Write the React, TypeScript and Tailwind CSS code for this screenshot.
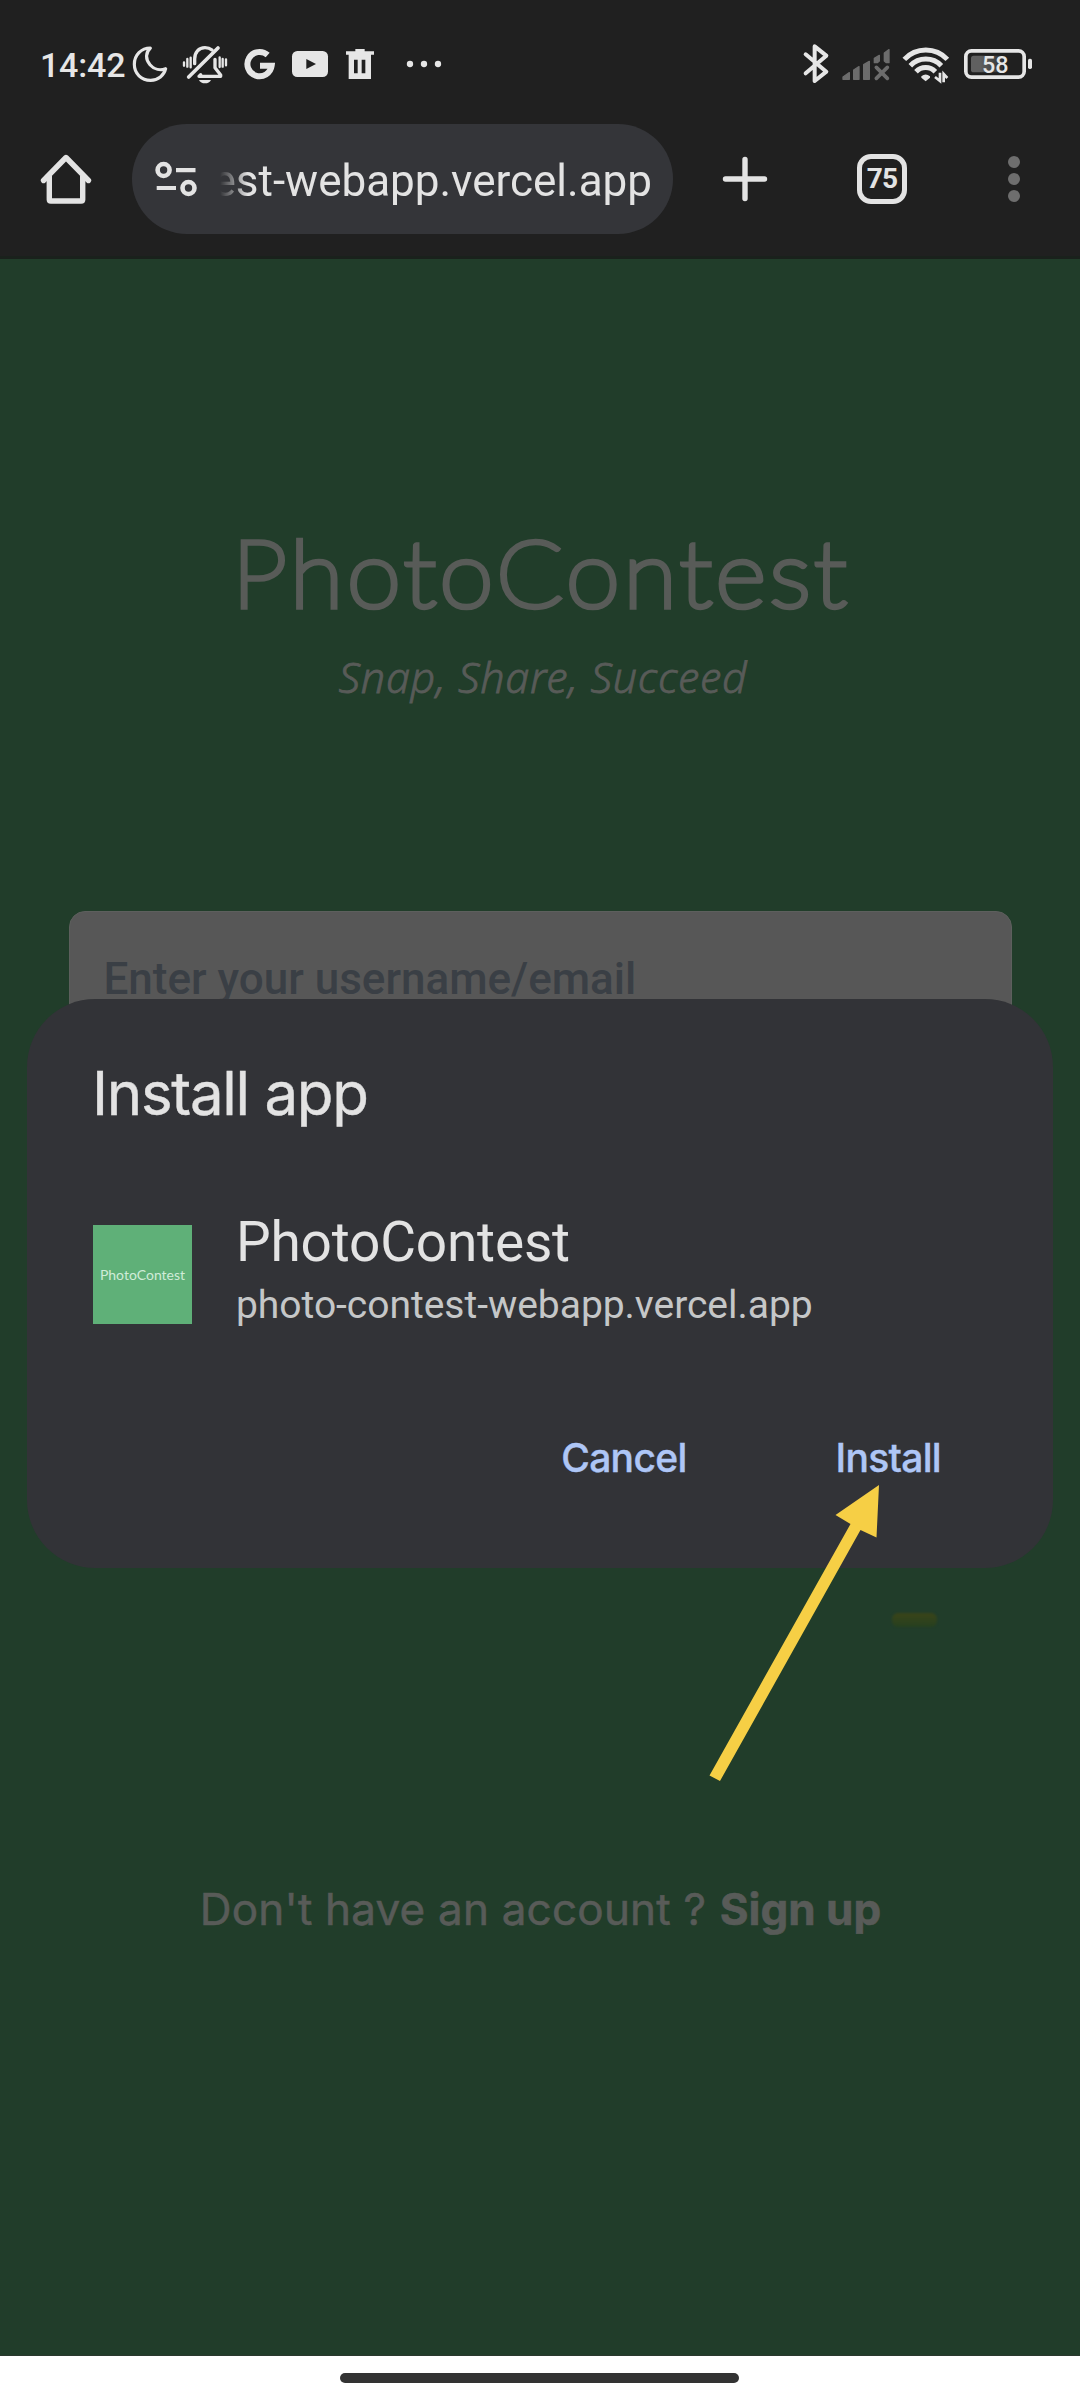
function StatusBar() {
  return (
    <div className="flex h-[124px] items-center justify-between pt-1 pr-10 pl-10 text-[#e6e6e6]">
      <div className="flex items-center">
        <span className="w-[89px] pt-px font-['Roboto',sans-serif] text-[34px] leading-10 font-medium tracking-[-0.2px]">14:42</span>
        <svg viewBox="387 66 126 132" className="h-11 w-[42px]" fill="none" stroke="currentColor" strokeWidth="9.5" strokeLinejoin="round">
          <path d="M451 84C424 84 403 105 403 133C403 161 424 181 452 181C475 181 492 166 497 146C482 152 463 149 450 134C436 118 436 98 451 84Z" />
        </svg>
        <svg viewBox="513 66 198 132" className="h-11 w-[66px]" fill="none" stroke="currentColor" strokeLinecap="round">
          <path d="M584 131V117C584 97 596 83 615 83C623 83 630 85 636 90" strokeWidth="10" />
          <path d="M566 171L654 84" strokeWidth="11" />
          <path d="M645 118V143L662 165V169H597L602 164" strokeWidth="10" strokeLinejoin="round" />
          <path d="M597 180H633C630 187 623 190 615 190C607 190 600 187 597 180Z" fill="currentColor" stroke="none" />
          <path d="M552 127V137M562 117V140M572 113V142M659 112V141M668 117V140M678 118V136" strokeWidth="7" />
        </svg>
        <svg viewBox="711 66 138 132" className="h-11 w-[46px]" fill="none" stroke="currentColor" strokeWidth="18">
          <path d="M803 105A36.5 36.5 0 1 0 815 137H780" />
        </svg>
        <svg viewBox="849 66 162 132" className="h-11 w-[54px]" fill="currentColor">
          <rect x="876" y="93" width="108" height="78" rx="16" />
          <path d="M919 117L948 132L919 147Z" fill="#202020" />
        </svg>
        <svg viewBox="1011 66 141 132" className="h-11 w-[47px]" fill="currentColor">
          <path d="M1066 87H1094V94H1122V104H1113V177H1046V104H1038V94H1066Z" />
          <path d="M1062 119H1073V160H1062ZM1085 119H1096V160H1085Z" fill="#202020" />
        </svg>
        <svg viewBox="1152 66 198 132" className="h-11 w-[66px]" fill="currentColor">
          <circle cx="1230" cy="132" r="9.5" />
          <circle cx="1272" cy="132" r="9.5" />
          <circle cx="1314" cy="132" r="9.5" />
        </svg>
      </div>
      <div className="flex items-center">
        <svg viewBox="48 66 120 132" className="h-11 w-10" fill="none" stroke="currentColor" strokeWidth="12" strokeLinecap="round" strokeLinejoin="round">
          <path d="M77 103L139 155L104 183V79L139 107L77 160" />
        </svg>
        <svg viewBox="168 66 180 132" className="h-11 w-[60px] text-[#6c6c6c]" fill="currentColor" stroke="currentColor" strokeWidth="4" strokeLinejoin="round">
          <path d="M189 171L208 158V178H189ZM221 150L237 140V178H221ZM251 134L268 124V178H251ZM283 115L298 106V123L292 128H283ZM313 99L327 89V128H319L313 123Z" />
          <path d="M289 142L322 175M322 142L289 175" strokeWidth="11" strokeLinecap="round" />
        </svg>
        <svg viewBox="348 66 180 132" className="h-11 w-[60px]" fill="none" stroke="currentColor" strokeWidth="15">
          <path d="M373 118A88 88 0 0 1 502 118" />
          <path d="M391 137A64 64 0 0 1 484 137" />
          <path d="M408 155A40 40 0 0 1 466 155" />
          <path d="M424 169Q437 158 450 169L450 173L437 184L424 173Z" fill="currentColor" stroke="none" />
          <path d="M480 158V183L465 171M491 187V162L502 174" strokeWidth="8" />
        </svg>
        <svg viewBox="528 66 252 132" className="h-11 w-[84px]" fill="none">
          <defs>
            <linearGradient id="charge" x1="0" x2="1">
              <stop offset="0.3" stopColor="#606060" />
              <stop offset="1" stopColor="#303030" />
            </linearGradient>
          </defs>
          <rect x="557.5" y="92.5" width="175" height="79" rx="17" stroke="currentColor" strokeWidth="11" />
          <rect x="573" y="107" width="96" height="50" rx="8" fill="url(#charge)" />
          <rect x="744" y="116" width="12" height="31" rx="5" fill="currentColor" />
          <text x="646" y="158" textAnchor="middle" fill="currentColor" className="font-['Roboto',sans-serif] text-[70px] font-medium">58</text>
        </svg>
      </div>
    </div>
  );
}

function Toolbar() {
  return (
    <div className="flex h-[132px] items-start text-[#e3e3e3]">
      <div className="flex h-[110px] w-[132px] items-center pl-9">
        <svg viewBox="36 149 60 60" className="size-[60px]" fill="none" stroke="currentColor" strokeWidth="5.4" strokeLinejoin="round">
          <path d="M43.5 180.5L66 157.5L88.5 180.5" strokeLinecap="round" />
          <path d="M49.3 176V199.5Q49.3 201 50.8 201H81.2Q82.7 201 82.7 199.5V176" />
        </svg>
      </div>
      <div className="flex h-[110px] w-[541px] items-center justify-between rounded-full bg-[#343539] pr-[21px] pl-[18px]">
        <svg viewBox="150 154 50 50" className="size-[50px]" fill="none" stroke="currentColor" strokeWidth="4.6">
          <circle cx="163.6" cy="170" r="6" />
          <path d="M176 170.2H195.5M156.7 188H176" strokeWidth="4.2" />
          <circle cx="188.5" cy="188" r="6" />
        </svg>
        <div className="flex w-[440px] justify-end [mask-image:linear-gradient(to_right,transparent_8px,black_36px)]">
          <span className="pt-[3px] font-['Roboto',sans-serif] text-[44px] leading-[56px] whitespace-nowrap">est-webapp.vercel.app</span>
        </div>
      </div>
      <div className="flex h-[110px] flex-1 items-center pl-[42px]">
        <svg viewBox="715 149 60 60" className="size-[60px]" fill="none" stroke="currentColor" strokeWidth="5.4" strokeLinecap="round">
          <path d="M745 159.5V198.5M725.5 179H764.5" />
        </svg>
        <div className="ml-[82px] flex size-[50px] items-center justify-center rounded-[14px] border-[5.5px] border-current">
          <span className="font-['Roboto',sans-serif] text-[28px] leading-8 font-bold tracking-[-0.7px]">75</span>
        </div>
        <div className="ml-[101px] flex flex-col gap-[5px] text-[#6e6e6e]">
          <i className="size-3 rounded-full bg-current" />
          <i className="size-3 rounded-full bg-current" />
          <i className="size-3 rounded-full bg-current" />
        </div>
      </div>
    </div>
  );
}

function InstallDialog() {
  return (
    <div className="absolute top-[740px] left-[27px] flex h-[569px] w-[1026px] flex-col rounded-[68px] bg-[#323337] px-[66px] font-['Roboto',sans-serif] text-[#e3e3e3]">
      <h2 className="mt-[54px] -ml-[1px] font-['Inter',sans-serif] text-[60px] leading-[80px] tracking-[-1.3px] [-webkit-text-stroke:0.4px_#e3e3e3]">Install app</h2>
      <div className="mt-[70px] flex items-start">
        <div className="mt-[22px] flex size-[99px] items-center justify-center bg-[#5fb078] font-['Lato',sans-serif] text-[14px] text-[#d0ecd8]">
          PhotoContest
        </div>
        <div className="ml-11 flex flex-col pt-px">
          <span className="text-[55px] leading-[76px] tracking-[-0.2px]">PhotoContest</span>
          <span className="text-[39px] leading-[50px] tracking-[-0.03px] text-[#c5c7c8]">photo-contest-webapp.vercel.app</span>
        </div>
      </div>
      <div className="mt-[98px] flex justify-end gap-[149px] pr-[46px] font-['Inter',sans-serif] text-[39px] leading-[60px] font-medium tracking-[-0.7px] text-[#aec6f6] [-webkit-text-stroke:0.4px_#aec6f6]">
        <button>Cancel</button>
        <button>Install</button>
      </div>
    </div>
  );
}

export default function App() {
  return (
    <div className="flex h-[2400px] w-[1080px] flex-col overflow-hidden bg-[#202020]">
      <StatusBar />
      <Toolbar />
      <div className="h-[3px] bg-[#1a211c]" />
      <main className="relative flex h-[2097px] flex-col items-center border-b border-[#2b382e] bg-[#213d2a] text-[#585b58]">
        <h1 className="mt-[252px] scale-x-105 pl-[3px] font-['Lato',sans-serif] text-[93px] leading-[120px] font-thin tracking-[3.6px] [-webkit-text-stroke:5.5px_#585b58]">
          PhotoContest
        </h1>
        <p className="mt-4 pl-[6px] font-['Noto_Sans',sans-serif] text-[43px] leading-[60px] font-light tracking-[0.7px] italic [-webkit-text-stroke:0.8px_#585b58]">
          Snap, Share, Succeed
        </p>
        <div className="mt-[204px] h-[136px] w-[943px] rounded-2xl border border-[#5d5f5d] bg-[#575757] pl-[34px] font-['Roboto',sans-serif] text-[44px] leading-[134px] font-medium text-[#3a3f45]">
          Enter your username/email
        </div>
        <i className="mt-[566px] ml-[749px] h-[14px] w-[45px] rounded-md bg-linear-to-b from-[#3a4419] to-[#26401f] blur-[1px]" />
        <p className="mt-[252px] pl-px font-['Inter',sans-serif] text-[44px] leading-[60px] tracking-[0.2px] whitespace-nowrap [-webkit-text-stroke:0.6px_#585b58]">
          Don't have an account ? <b className="ml-px font-bold tracking-[0px]">Sign up</b>
        </p>
        <InstallDialog />
        <svg viewBox="700 1480 190 310" className="absolute top-[1221px] left-[700px] h-[310px] w-[190px]" fill="#f6cf45">
          <path d="M879 1485L876.5 1537.5L860.5 1530L720 1781L709.5 1775.5L850.5 1524L835.5 1515Z" />
        </svg>
      </main>
      <div className="flex h-11 justify-center bg-white pt-[17px] pr-[2px]">
        <div className="h-[10px] w-[399px] rounded-full bg-[#333333]" />
      </div>
    </div>
  );
}
